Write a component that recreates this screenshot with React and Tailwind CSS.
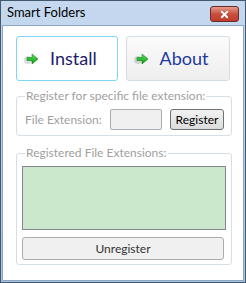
import { X } from 'lucide-react'

function Arrow() {
  return (
    <svg width="16" height="14" viewBox="0 0 16 14" className="shrink-0">
      <defs>
        <linearGradient id="ag" x1="0" y1="0" x2="0" y2="1">
          <stop offset="0" stopColor="#5ee05a" />
          <stop offset="1" stopColor="#0a9a1a" />
        </linearGradient>
      </defs>
      <ellipse cx="4" cy="8" rx="4" ry="4" fill="#000" opacity="0.14" />
      <path d="M3 5.5h5V2l6 5-6 5V8.5H3z" fill="url(#ag)" stroke="#078a16" strokeWidth="0.6" />
    </svg>
  )
}

function BigButton({ label, active }) {
  return (
    <div
      className={
        active
          ? 'flex h-[45px] w-[102px] items-center gap-[10px] rounded-[3px] border border-[#7ed6f7] bg-white pl-[7px]'
          : 'flex h-[45px] w-[105px] items-center gap-[10px] rounded-[3px] border border-[#d3dde3] bg-gradient-to-b from-[#fbfbfb] to-[#eeeeee] pl-[7px]'
      }
    >
      <Arrow />
      <span className={active ? 'text-[18px] text-[#1c1c6a]' : 'text-[18px] text-[#1d3aa0]'}>{label}</span>
    </div>
  )
}

export default function App() {
  return (
    <div
      className="flex h-[283px] w-[246px] flex-col border border-[#41586f] bg-gradient-to-b from-[#c5d8ee] to-[#a9c5e4]"
      style={{ fontFamily: 'Lato, "Noto Sans", sans-serif' }}
    >
      <div className="flex h-[24px] items-center justify-between pl-[6px] pr-[6px]">
        <span className="text-[13px] text-black">Smart Folders</span>
        <div className="mt-[2px] flex h-[16px] w-[29px] items-center justify-center rounded-[3px] border border-[#6b2a2a] bg-gradient-to-b from-[#e59a8c] via-[#c7503e] to-[#c23a2a]">
          <X size={11} strokeWidth={4} className="text-white" />
        </div>
      </div>
      <div className="mx-[1px] mb-[1px] flex flex-1 flex-col border border-[#8aa6c4] bg-white px-[13px] pt-[10px]">
        <div className="flex gap-[8px]">
          <BigButton label="Install" active />
          <BigButton label="About" />
        </div>
        <fieldset className="mt-[8px] h-[47px] w-[216px] rounded-[3px] border border-[#d5dfe5] pl-[8px] pr-[6px]">
          <legend className="px-[1px] text-[12px] leading-[14px] text-[#a0a0a0]">Register for specific file extension:</legend>
          <div className="mt-[6px] flex items-center">
            <span className="w-[85px] text-[12px] text-[#a0a0a0]">File Extension:</span>
            <div className="h-[21px] w-[52px] rounded-[2px] border border-[#abadb3] bg-[#f0f0f0]" />
            <div className="ml-[8px] flex h-[21px] w-[54px] items-center justify-center rounded-[3px] border border-[#707070] bg-gradient-to-b from-[#f2f2f2] to-[#dcdcdc] text-[12px] text-black">
              Register
            </div>
          </div>
        </fieldset>
        <fieldset className="mt-[10px] h-[119px] w-[216px] rounded-[3px] border border-[#d5dfe5] px-[5px]">
          <legend className="ml-[3px] px-[1px] text-[12px] leading-[14px] text-[#a0a0a0]">Registered File Extensions:</legend>
          <div className="mt-[6px] h-[64px] w-[204px] border border-[#828790] bg-[#cce8cc]" />
          <div className="mt-[7px] flex h-[23px] w-[202px] items-center justify-center rounded-[3px] border border-[#acacac] bg-[#f0f0f0] text-[12px] text-[#333]">
            Unregister
          </div>
        </fieldset>
      </div>
    </div>
  )
}
